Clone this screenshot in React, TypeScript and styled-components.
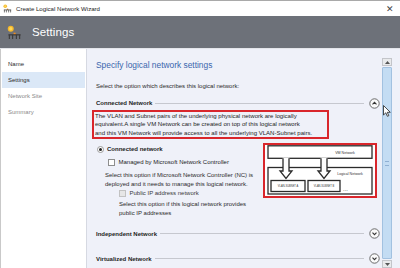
import React from 'react';
import styled, { createGlobalStyle } from 'styled-components';

const GlobalStyle = createGlobalStyle`
  html, body {
    margin: 0;
    padding: 0;
    background: #ffffff;
  }
  body {
    font-family: "Liberation Sans", Arial, sans-serif;
    color: #1e1e1e;
  }
`;

const Window = styled.div`
  position: relative;
  width: 400px;
  height: 268px;
  overflow: hidden;
  display: flex;
  flex-direction: column;
  background: #ffffff;
  border-top: 1px solid #a9a9a9;
  box-sizing: border-box;
`;

const TitleBar = styled.div`
  height: 15px;
  display: flex;
  align-items: center;
  padding: 0 4px 0 3px;
  gap: 4px;
  font-size: 6.1px;
  color: #1b1b1b;
`;

const TitleText = styled.span`
  flex: 1;
`;

const CloseGlyph = styled.span`
  font-size: 9px;
  color: #444;
  margin-right: 2px;
`;

const Banner = styled.div`
  height: 32px;
  background: #6d7179;
  display: flex;
  align-items: center;
  padding-left: 7px;
  gap: 10px;
  border-bottom: 1px solid #e3e5ea;
`;

const BannerTitle = styled.span`
  color: #ffffff;
  font-size: 11.5px;
  letter-spacing: 0.1px;
`;

const Body = styled.div`
  flex: 1;
  display: flex;
  min-height: 0;
`;

const Nav = styled.nav`
  width: 86px;
  padding-top: 7px;
  box-sizing: border-box;
  border-left: 1px solid #c9c9c9;
  display: flex;
  flex-direction: column;
`;

const NavItem = styled.div<{ $active?: boolean; $dim?: boolean }>`
  height: 16px;
  display: flex;
  align-items: center;
  padding-left: 6px;
  margin: 0 1px 0 1px;
  font-size: 6px;
  color: ${({ $dim }) => ($dim ? '#8a8a8a' : '#2a2a2a')};
  background: ${({ $active }) => ($active ? '#dbe8f7' : 'transparent')};
  box-sizing: border-box;
`;

const Content = styled.div`
  flex: 1;
  display: flex;
  background: #eff1f9;
  border-left: 1px solid #d6d9e2;
`;

const Main = styled.div`
  flex: 1;
  padding: 9px 1px 0 9px;
  display: flex;
  flex-direction: column;
  min-width: 0;
`;

const PageTitle = styled.div`
  font-size: 8.4px;
  line-height: 14px;
  color: #3a66ad;
`;

const Lead = styled.div`
  margin-top: 9px;
  font-size: 6px;
  line-height: 10px;
  color: #2a2a2a;
`;

const SectionHeader = styled.div<{ $gap: number }>`
  margin-top: ${({ $gap }) => $gap}px;
  height: 12px;
  display: flex;
  align-items: center;
  gap: 3px;
`;

const SectionLabel = styled.span`
  font-size: 6px;
  font-weight: bold;
  color: #1e1e1e;
`;

const Rule = styled.span`
  flex: 1;
  height: 1px;
  background: #c6c8cf;
`;

const Toggle = styled.span`
  width: 11px;
  height: 11px;
  display: flex;
  align-items: center;
  justify-content: center;
  margin-left: 2px;
  margin-right: 1px;
`;

const NoteBox = styled.div`
  margin: 1px 0 0 -4px;
  width: 237px;
  box-sizing: border-box;
  border: 2px solid #d9262c;
  padding: 0 1px;
  font-size: 6.05px;
  line-height: 8.4px;
  color: #1e1e1e;
  white-space: nowrap;
  overflow: hidden;
`;

const OptionArea = styled.div`
  display: flex;
  align-items: flex-start;
`;

const Options = styled.div`
  width: 167px;
  display: flex;
  flex-direction: column;
`;

const OptionRow = styled.div<{ $indent: number; $top: number; $disabled?: boolean }>`
  margin-top: ${({ $top }) => $top}px;
  margin-left: ${({ $indent }) => $indent}px;
  height: 10px;
  display: flex;
  align-items: center;
  gap: 3px;
  font-size: 6px;
  color: ${({ $disabled }) => ($disabled ? '#3a3a3a' : '#1e1e1e')};
`;

const OptionStrong = styled.span`
  font-weight: bold;
`;

const Radio = styled.span`
  width: 7px;
  height: 7px;
  border-radius: 50%;
  border: 1px solid #9a9a9a;
  background: #ffffff;
  box-sizing: border-box;
  display: flex;
  align-items: center;
  justify-content: center;

  &::after {
    content: '';
    width: 3px;
    height: 3px;
    border-radius: 50%;
    background: #222;
  }
`;

const Check = styled.span<{ $disabled?: boolean }>`
  width: 7px;
  height: 7px;
  border: 1px solid ${({ $disabled }) => ($disabled ? '#c2c2c2' : '#8e8e8e')};
  background: ${({ $disabled }) => ($disabled ? '#e6e6e6' : '#ffffff')};
  box-sizing: border-box;
  margin-right: 0.5px;
`;

const Hint = styled.div<{ $indent: number; $top: number }>`
  margin-top: ${({ $top }) => $top}px;
  margin-left: ${({ $indent }) => $indent}px;
  font-size: 6px;
  line-height: 8.6px;
  color: #2a2a2a;
  white-space: nowrap;
`;

const Diagram = styled.div`
  margin-top: 4px;
  width: 114px;
  height: 55px;
  border: 2px solid #d9262c;
  box-sizing: border-box;
  background: #ffffff;
`;

const Scrollbar = styled.div`
  width: 10px;
  margin: 9px 8px 0 0;
  display: flex;
  flex-direction: column;
`;

const ScrollButton = styled.div`
  height: 8px;
  background: #e9eaec;
  border: 1px solid #c3c5ca;
  box-sizing: border-box;
  display: flex;
  align-items: center;
  justify-content: center;
`;

const Thumb = styled.div`
  flex: 1;
  margin: 1px 0;
  background: #c3dcf3;
  border: 1px solid #a2c1e0;
  border-radius: 1px;
  box-sizing: border-box;
  display: flex;
  align-items: center;
  justify-content: center;
`;

const Grip = styled.span`
  width: 4px;
  height: 3px;
  border-top: 1px solid #8fb0d3;
  border-bottom: 1px solid #8fb0d3;
`;

const Cursor = styled.svg`
  position: absolute;
  left: 383px;
  top: 104px;
`;

function NetIcon({ size }: { size: number }) {
  return (
    <svg width={size} height={size} viewBox="0 0 16 16">
      <circle cx="4" cy="4" r="3.2" fill="#f5b82a" />
      <circle cx="4" cy="4" r="1.8" fill="#ffd75a" />
      <rect x="7" y="8.2" width="2.2" height="2.2" fill="#f08c1c" />
      <path d="M1.5 10.5 H14.5" stroke="#3b3b3b" strokeWidth="1.3" />
      <path d="M2.5 10.5 V15 M6 10.5 V15 M10 10.5 V15 M13.5 10.5 V15" stroke="#3b3b3b" strokeWidth="1.2" />
    </svg>
  );
}

function Chevron({ up }: { up?: boolean }) {
  return (
    <svg width="11" height="11" viewBox="0 0 11 11">
      <circle cx="5.5" cy="5.5" r="4.7" fill="#fafafa" stroke="#5a5a5a" strokeWidth="0.9" />
      <path
        d={up ? 'M3.5 6.4 L5.5 4.4 L7.5 6.4' : 'M3.5 4.6 L5.5 6.6 L7.5 4.6'}
        fill="none"
        stroke="#333"
        strokeWidth="1.1"
      />
    </svg>
  );
}

function NetworkDiagram() {
  const line = { stroke: '#2b2b2b', strokeWidth: 1.3, fill: 'none' };
  return (
    <svg width="110" height="51" viewBox="0 0 110 51">
      <rect x="3" y="0.8" width="104" height="12.5" {...line} fill="#fff" />
      <text x="80" y="8.6" fontSize="3.6" fill="#333" textAnchor="middle" fontFamily="Liberation Sans, sans-serif">
        VM Network
      </text>
      <rect x="3" y="22.5" width="104" height="26.5" {...line} fill="#fff" />
      <text x="85" y="30" fontSize="3.6" fill="#333" textAnchor="middle" fontFamily="Liberation Sans, sans-serif">
        Logical Network
      </text>
      {[18, 56].map((x) => (
        <g key={x}>
          <rect x={x - 0.4} y="12.6" width="6.8" height="1.6" fill="#fff" />
          <path d={`M${x} 13.3 V26 H${x - 3} L${x + 3} 33.5 L${x + 9} 26 H${x + 6} V13.3`} {...line} fill="#fff" />
        </g>
      ))}
      <rect x="6" y="35.5" width="34" height="11" {...line} fill="#fff" />
      <text x="23" y="42.4" fontSize="2.6" fill="#333" textAnchor="middle" fontFamily="Liberation Sans, sans-serif">
        VLAN-SUBNET A
      </text>
      <rect x="43" y="35.5" width="32" height="11" {...line} fill="#fff" />
      <text x="59" y="42.4" fontSize="2.6" fill="#333" textAnchor="middle" fontFamily="Liberation Sans, sans-serif">
        VLAN-SUBNET B
      </text>
      <text x="78" y="46" fontSize="6" fill="#333" fontFamily="Liberation Sans, sans-serif">
        ...
      </text>
    </svg>
  );
}

export default function App() {
  return (
    <>
      <GlobalStyle />
      <Window>
        <TitleBar>
          <NetIcon size={9} />
          <TitleText>Create Logical Network Wizard</TitleText>
          <CloseGlyph>✕</CloseGlyph>
        </TitleBar>
        <Banner>
          <NetIcon size={15} />
          <BannerTitle>Settings</BannerTitle>
        </Banner>
        <Body>
          <Nav>
            <NavItem>Name</NavItem>
            <NavItem $active>Settings</NavItem>
            <NavItem $dim>Network Site</NavItem>
            <NavItem $dim>Summary</NavItem>
          </Nav>
          <Content>
            <Main>
              <PageTitle>Specify logical network settings</PageTitle>
              <Lead>Select the option which describes this logical network:</Lead>

              <SectionHeader $gap={6}>
                <SectionLabel>Connected Network</SectionLabel>
                <Rule />
                <Toggle>
                  <Chevron up />
                </Toggle>
              </SectionHeader>
              <NoteBox>
                The VLAN and Subnet pairs of the underlying physical network are logically
                <br />
                equivalent.A single VM Network can be created on top of this logical network
                <br />
                and this VM Network will provide access to all the underlying VLAN-Subnet pairs.
              </NoteBox>
              <OptionArea>
                <Options>
                  <OptionRow $indent={1} $top={5}>
                    <Radio />
                    <OptionStrong>Connected network</OptionStrong>
                  </OptionRow>
                  <OptionRow $indent={12} $top={3}>
                    <Check />
                    Managed by Microsoft Network Controller
                  </OptionRow>
                  <Hint $indent={9} $top={4}>
                    Select this option if Microsoft Network Controller (NC) is
                    <br />
                    deployed and it needs to manage this logical network.
                  </Hint>
                  <OptionRow $indent={23} $top={0} $disabled>
                    <Check $disabled />
                    Public IP address network
                  </OptionRow>
                  <Hint $indent={23} $top={2}>
                    Select this option if this logical network provides
                    <br />
                    public IP addresses
                  </Hint>
                </Options>
                <Diagram>
                  <NetworkDiagram />
                </Diagram>
              </OptionArea>

              <SectionHeader $gap={10}>
                <SectionLabel>Independent Network</SectionLabel>
                <Rule />
                <Toggle>
                  <Chevron />
                </Toggle>
              </SectionHeader>
              <SectionHeader $gap={13}>
                <SectionLabel>Virtualized Network</SectionLabel>
                <Rule />
                <Toggle>
                  <Chevron />
                </Toggle>
              </SectionHeader>
            </Main>
            <Scrollbar>
              <ScrollButton>
                <svg width="5" height="3" viewBox="0 0 5 3">
                  <path d="M0 3 L2.5 0 L5 3 Z" fill="#555" />
                </svg>
              </ScrollButton>
              <Thumb>
                <Grip />
              </Thumb>
              <ScrollButton>
                <svg width="5" height="3" viewBox="0 0 5 3">
                  <path d="M0 0 L2.5 3 L5 0 Z" fill="#555" />
                </svg>
              </ScrollButton>
            </Scrollbar>
          </Content>
        </Body>
        <Cursor width="8" height="12" viewBox="0 0 8 12">
          <path d="M0.5 0.5 V10 L2.8 7.8 L4.4 11.3 L5.8 10.7 L4.3 7.3 H7.3 Z" fill="#fff" stroke="#222" strokeWidth="0.8" />
        </Cursor>
      </Window>
    </>
  );
}
